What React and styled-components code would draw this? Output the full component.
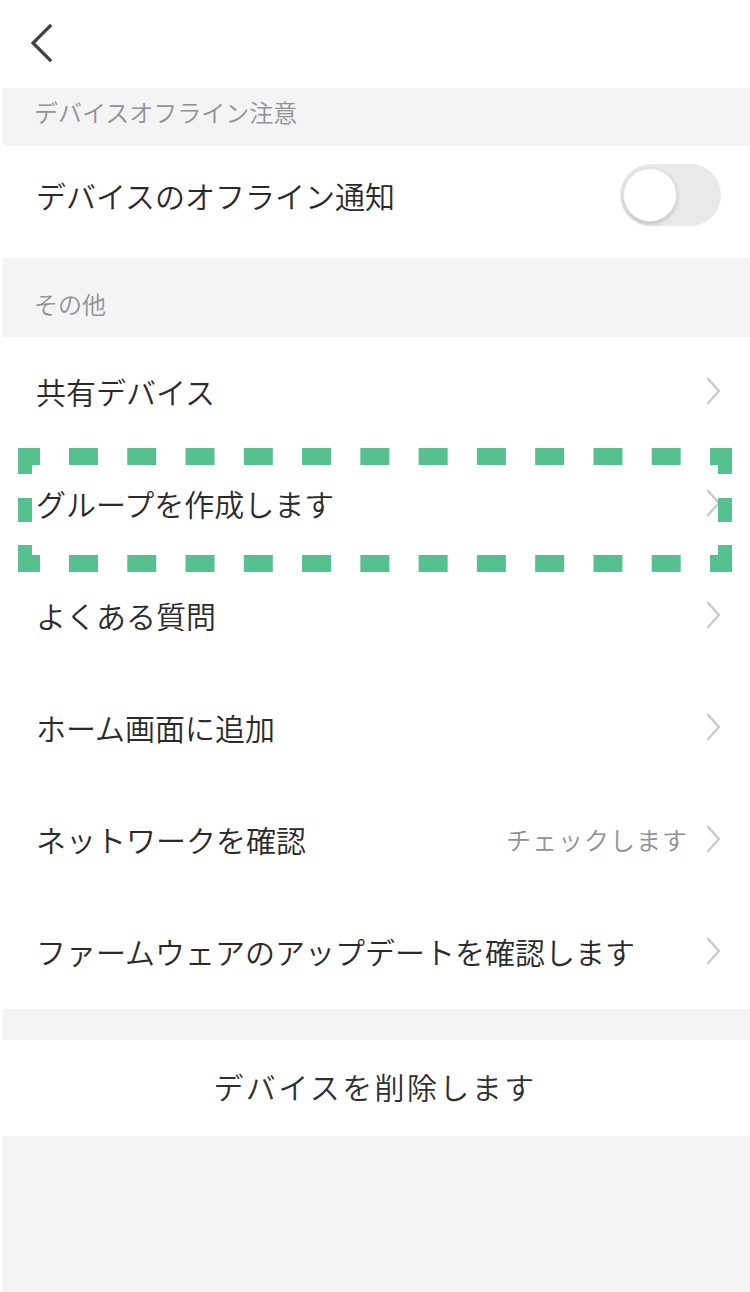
import React from 'react';
import styled, { createGlobalStyle } from 'styled-components';

const GlobalStyle = createGlobalStyle`
  html, body { margin: 0; padding: 0; background: #ffffff; }
  body { font-family: "Noto Sans CJK JP", "Noto Sans", sans-serif; }
`;

const GREEN = '#56c18f';

const Page = styled.div`
  width: 750px;
  min-height: 1292px;
  display: flex;
  flex-direction: column;
  background: #ffffff;
`;

const Header = styled.div`
  height: 88px;
  display: flex;
  align-items: center;
  padding-left: 30px;
  box-sizing: border-box;
`;

const BackButton = styled.button`
  border: none;
  background: none;
  padding: 0;
  margin-top: -2px;
  display: flex;
  cursor: pointer;
`;

const SectionTitle = styled.div`
  height: ${(p) => p.$height}px;
  margin-left: 3px;
  background: #f4f4f4;
  display: flex;
  align-items: flex-end;
  padding: 0 0 ${(p) => p.$bottom}px 31px;
  box-sizing: border-box;
  font-size: 24px;
  font-weight: 350;
  line-height: 24px;
  color: #8f9297;
`;

const Row = styled.div`
  position: relative;
  height: 112px;
  display: flex;
  align-items: center;
  justify-content: space-between;
  padding: 0 29px ${(p) => p.$lift || 4}px 36px;
  box-sizing: border-box;
  background: #ffffff;
`;

const Label = styled.span`
  font-size: 30px;
  font-weight: 350;
  color: #2a2a2a;
  line-height: 1;
`;

const Right = styled.div`
  display: flex;
  align-items: center;
  gap: 18px;
`;

const Hint = styled.span`
  font-size: 25px;
  font-weight: 350;
  letter-spacing: 1px;
  color: #8d9197;
  line-height: 1;
`;

const Track = styled.div`
  width: 101px;
  height: 62px;
  border-radius: 31px;
  background: #e9e9ea;
  display: flex;
  align-items: center;
  padding: 0 3px;
  box-sizing: border-box;
`;

const Knob = styled.div`
  width: 54px;
  height: 54px;
  border-radius: 50%;
  background: #ffffff;
  border: 1px solid #e2e2e2;
  box-sizing: border-box;
  box-shadow: 0 2px 4px rgba(0, 0, 0, 0.18);
`;

const Gap = styled.div`
  height: ${(p) => p.$height}px;
  margin-left: 3px;
  background: #f4f4f4;
`;

const DeleteRow = styled.div`
  height: 96px;
  display: flex;
  align-items: center;
  justify-content: center;
  padding-bottom: 4px;
  box-sizing: border-box;
  font-size: 30px;
  font-weight: 350;
  letter-spacing: 2.4px;
  color: #2f2f2f;
  background: #ffffff;
`;

const Fill = styled.div`
  flex: 1;
  margin-left: 3px;
  background: #f4f4f4;
`;

const Highlight = styled.svg`
  position: absolute;
  left: 18px;
  top: -1px;
  z-index: 2;
  pointer-events: none;
`;

const Chevron = () => (
  <svg width="15" height="28" viewBox="0 0 15 28">
    <path d="M2 2 L13 14 L2 26" fill="none" stroke="#c4cad0" strokeWidth="2.4" strokeLinecap="round" strokeLinejoin="round" />
  </svg>
);

// dashed green frame round one row
const DashFrame = () => {
  const W = 714;
  const H = 124;
  const dashes = [];
  for (let i = 0; i < 11; i++) {
    const x = 51 + i * 58.27;
    dashes.push(<rect key={'t' + i} x={x} y={0} width={29} height={17} />);
    dashes.push(<rect key={'b' + i} x={x} y={H - 17} width={29} height={17} />);
  }
  return (
    <Highlight width={W} height={H} viewBox={`0 0 ${W} ${H}`} fill={GREEN}>
      {/* corners */}
      <rect x={0} y={0} width={22} height={17} />
      <rect x={0} y={0} width={14} height={26} />
      <rect x={W - 22} y={0} width={22} height={17} />
      <rect x={W - 14} y={0} width={14} height={26} />
      <rect x={0} y={H - 17} width={22} height={17} />
      <rect x={0} y={97} width={14} height={27} />
      <rect x={W - 22} y={H - 17} width={22} height={17} />
      <rect x={W - 14} y={97} width={14} height={27} />
      {/* sides */}
      <rect x={0} y={50} width={14} height={24} />
      <rect x={W - 14} y={50} width={14} height={24} />
      {dashes}
    </Highlight>
  );
};

const items = [
  { label: '共有デバイス' },
  { label: 'グループを作成します', marked: true },
  { label: 'よくある質問' },
  { label: 'ホーム画面に追加' },
  { label: 'ネットワークを確認', hint: 'チェックします' },
  { label: 'ファームウェアのアップデートを確認します' },
];

export default function App() {
  return (
    <>
      <GlobalStyle />
      <Page>
        <Header>
          <BackButton aria-label="back">
            <svg width="24" height="38" viewBox="0 0 24 38">
              <path d="M20 2 L3 19 L20 36" fill="none" stroke="#3c4246" strokeWidth="3.2" strokeLinecap="square" />
            </svg>
          </BackButton>
        </Header>

        <SectionTitle $height={58} $bottom={22}>デバイスオフライン注意</SectionTitle>
        <Row $lift={15}>
          <Label>デバイスのオフライン通知</Label>
          <Track>
            <Knob />
          </Track>
        </Row>

        <SectionTitle $height={79} $bottom={21}>その他</SectionTitle>
        {items.map((it) => (
          <Row key={it.label}>
            <Label>{it.label}</Label>
            <Right>
              {it.hint && <Hint>{it.hint}</Hint>}
              <Chevron />
            </Right>
            {it.marked && <DashFrame />}
          </Row>
        ))}

        <Gap $height={31} />
        <DeleteRow>デバイスを削除します</DeleteRow>
        <Fill />
      </Page>
    </>
  );
}
